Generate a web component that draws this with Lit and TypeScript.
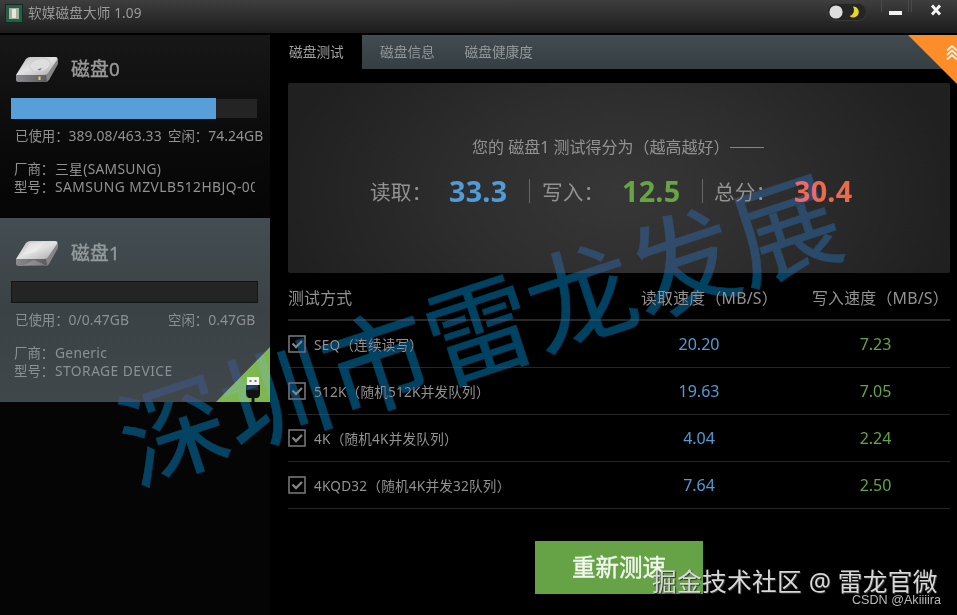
import { LitElement, html, css, svg } from "lit";
import { customElement, property } from "lit/decorators.js";

interface Disk {
  name: string;
  percent: number;
  used: string;
  free: string;
  vendor: string;
  model: string;
  usb: boolean;
}

const disks: Disk[] = [
  { name: "磁盘0", percent: 83.5, used: "389.08/463.33", free: "74.24GB", vendor: "三星(SAMSUNG)", model: "SAMSUNG MZVLB512HBJQ-00", usb: false },
  { name: "磁盘1", percent: 0, used: "0/0.47GB", free: "0.47GB", vendor: "Generic", model: "STORAGE DEVICE", usb: true },
];

const tests = [
  { name: "SEQ（连续读写）", read: "20.20", write: "7.23" },
  { name: "512K（随机512K并发队列）", read: "19.63", write: "7.05" },
  { name: "4K（随机4K并发队列）", read: "4.04", write: "2.24" },
  { name: "4KQD32（随机4K并发32队列）", read: "7.64", write: "2.50" },
];

@customElement("disk-card")
export class DiskCard extends LitElement {
  @property({ attribute: false }) disk!: Disk;

  static styles = css`
    :host { display: block; }
    .card {
      position: relative;
      box-sizing: border-box;
      height: 183px;
      padding: 16px 0 0 11px;
      color: #929292;
      font-size: 13.4px;
      line-height: 18px;
      background: linear-gradient(#171717, #0a0a0a 60%, #050505);
      white-space: nowrap;
      overflow: hidden;
    }
    .active {
      height: 184px;
      padding-top: 17px;
      background: linear-gradient(#434d52, #3b4245 50%, #40474a);
      color: #8b9193;
    }
    .head { display: flex; align-items: center; height: 36px; }
    .drive { width: 50px; height: 32px; margin-right: 10px; }
    .name { font-size: 18.8px; color: #999; letter-spacing: 0.2px; -webkit-text-stroke: 0.4px currentColor; }
    .active .name { color: #939a9c; }
    .bar { display: flex; align-items: center; width: 246px; height: 21px; margin-top: 11px; }
    .fill { height: 21px; background: #569fd8; }
    .rest { flex: 1; height: 19px; background: #242424; }
    .active .bar { box-sizing: border-box; width: 247px; height: 22px; border: 1px solid #111516; background: #242424; margin-top: 10px; }
    .usage { display: grid; grid-template-columns: 153px 1fr; margin: 8px 0 0 4px; }
    .info { margin: 15px 0 0 3px; width: 241px; overflow: hidden; }
    .info div { display: flex; height: 18px; overflow: hidden; }
    .label { width: 41px; flex: none; }
    .num { font-size: 13.9px; letter-spacing: 0.08px; }
    .latin { font-size: 13.8px; letter-spacing: 0.45px; }
    .mixed { font-size: 13.8px; letter-spacing: 0.3px; }
    .usb { position: absolute; right: 0; bottom: 0; width: 54px; height: 55px; }
  `;

  render() {
    const d = this.disk;
    return html`
      <div class="card ${d.usb ? "active" : ""}">
        <div class="head">
          <svg class="drive" viewBox="0 0 50 32">
            <defs>
              <linearGradient id="top" x1="0" y1="0" x2="1" y2="1">
                <stop offset="0" stop-color="#bdbdbd" /><stop offset=".5" stop-color="#e2e2e2" /><stop offset="1" stop-color="#a9a9a9" />
              </linearGradient>
              <linearGradient id="side" x1="0" y1="0" x2="1" y2="0">
                <stop offset="0" stop-color="#8b8a8e" /><stop offset="1" stop-color="#5c5c60" />
              </linearGradient>
            </defs>
            <path d="M5 24 L15 6 Q17 4 20 4 H44 Q47 4 47 7 V11 L38 27 Q37 29 34 29 H8 Q5 29 5 26Z" fill="#858587" />
            <path d="M5 22 L15 6 Q17 4 20 4 H44 Q47 4 46 7 L37 20 Q36 22 33 22 H7 Q5 22 5 22Z" fill="url(#top)" />
            <path d="M5 22 H35 L36 28 Q35 29 33 29 H8 Q5 29 5 26Z" fill="url(#side)" />
            ${d.usb
              ? svg`<path d="M19 6 L35 5 L24 15 L11 18Z" fill="#fff" opacity=".35"/><path d="M13 28 L23 23 L34 28Z" fill="#b5b5b8" opacity=".4"/>`
              : svg`<ellipse cx="29" cy="12" rx="10.500" ry="6.500" fill="#dedede" stroke="#cccccc" transform="rotate(-12 29 12)"/><path d="M26 16.500 L31 15 L29 17.500Z" fill="#777"/><rect x="27.500" y="23.500" width="2" height="3.500" fill="#e0cc7c"/>`}
          </svg>
          <div class="name">${d.name}</div>
        </div>
        <div class="bar">
          <div class="fill" style="width:${d.percent}%"></div>
          <div class="rest"></div>
        </div>
        <div class="usage">
          <div>已使用：<span class="num">${d.used}</span></div>
          <div>空闲：<span class="num">${d.free}</span></div>
        </div>
        <div class="info">
          <div><span class="label">厂商：</span><span class="mixed">${d.vendor}</span></div>
          <div><span class="label">型号：</span><span class="latin">${d.model}</span></div>
        </div>
        ${d.usb
          ? html`<svg class="usb" viewBox="0 0 54 55">
              <path d="M54 0 V55 H0Z" fill="#7eb750" />
              <rect x="31" y="30" width="12" height="9" fill="#f4f4f4" />
              <rect x="33.500" y="33" width="2" height="2" fill="#777" /><rect x="38.500" y="33" width="2" height="2" fill="#777" />
              <path d="M30 38 H44 V47 Q44 50 41 51 H38.500 V55 H35.500 V51 H33 Q30 50 30 47Z" fill="#111" />
              <path d="M31.500 39.500 H42.500 V43 H31.500Z" fill="#2b2b2b" />
            </svg>`
          : ""}
      </div>
    `;
  }
}

@customElement("app-root")
export class AppRoot extends LitElement {
  static styles = css`
    :host {
      display: block;
      position: relative;
      width: 957px;
      height: 615px;
      overflow: hidden;
      background: #000;
      color: #929292;
      font-family: "Noto Sans", "Noto Sans CJK SC", sans-serif;
    }
    .titlebar {
      box-sizing: border-box;
      display: flex;
      align-items: flex-start;
      height: 35px;
      background: linear-gradient(#3e3e3e, #1c1c1c 94%, #000 95%);
      padding-left: 5px;
    }
    .logo { width: 18px; height: 19px; margin-top: 4px; }
    .title { margin-left: 5px; font-size: 13.6px; letter-spacing: 0.15px; line-height: 26px; color: #9a9a9a; flex: 1; }
    .controls { width: 132px; height: 34px; }
    .body { display: flex; height: 580px; }
    .sidebar { width: 270px; background: #050505; }
    .main { flex: 1; display: flex; flex-direction: column; position: relative; }
    .tabs { display: flex; height: 34px; background: linear-gradient(#424c51, #353e41); font-size: 13.7px; line-height: 33px; }
    .tab { width: 92px; box-sizing: border-box; padding-left: 19px; background: #000; color: #a2a2a2; }
    .idle { background: none; color: #92989a; padding-left: 18px; width: 84.5px; }
    .wide { width: 110px; }
    .fold { position: absolute; top: 0; right: 0; width: 49px; height: 49px; }
    .score {
      box-sizing: border-box;
      margin: 14px 7px 0 18px;
      height: 190px;
      padding-top: 51px;
      border-radius: 2px;
      background: radial-gradient(ellipse 340px 210px at 50% 58%, #373737, #2e2e2e 45%, #202020);
    }
    .caption { display: flex; align-items: center; margin-left: 184px; font-size: 16px; line-height: 26px; white-space: pre; }
    .dash { width: 34px; height: 1px; background: #858585; margin-left: 1px; }
    .results { display: grid; grid-template-columns: 79px 80px 13px 80px 80px 12px 80px 1fr; align-items: center; margin: 11px 0 0 82px; height: 40px; font-size: 20.7px; white-space: nowrap; }
    .rule { width: 1px; height: 24px; background: #666; }
    .num { font: 700 28.8px/38px "Noto Sans", sans-serif; letter-spacing: 0.2px; }
    .blue { color: #519bd6; }
    .green { color: #66a446; }
    .red { color: #ea6a4c; }
    .table { margin: 0 7px 0 18px; font-size: 13.6px; letter-spacing: 0.22px; }
    .row { display: grid; grid-template-columns: 26px 313px 144px 1fr; height: 46px; align-items: center; border-bottom: 1px solid #262626; white-space: nowrap; }
    .header { grid-template-columns: 353px 171px 1fr; height: 46px; border-bottom: 2px solid #292929; font-size: 15.9px; }
    .header div { line-height: 40px; margin-bottom: -4px; }
    .value { font-size: 16px; text-align: center; letter-spacing: 0; }
    .value.green { margin-left: 30px; width: 149px; }
    .check { width: 18px; height: 18px; display: block; }
    .button { align-self: flex-start; margin: 32px 0 0 265px; width: 168px; height: 53px; box-sizing: border-box; padding-left: 37px; background: #66a346; color: #f4f8f2; font-size: 23.5px; -webkit-text-stroke: 0.4px currentColor; line-height: 52px; }
    .watermark {
      position: absolute;
      left: 479px;
      top: 328.5px;
      transform: translate(-50%, -50%) rotate(-18.2deg);
      font-size: 107.3px;
      line-height: 1;
      color: #005279;
      -webkit-text-stroke: 0.6px #005279;
      opacity: 0.8;
      mix-blend-mode: lighten;
      white-space: nowrap;
    }
    .community { position: absolute; left: 652px; top: 564px; font-size: 24.7px; letter-spacing: 0.3px; line-height: 36px; color: #d8d8d8; text-shadow: 1px 1px 1px #333; white-space: nowrap; }
    .credit { position: absolute; left: 852px; top: 591px; font: 12.6px/18px "Liberation Sans", sans-serif; color: #b9b9b9; white-space: nowrap; }
  `;

  render() {
    return html`
      <div class="titlebar">
        <svg class="logo" viewBox="0 0 18 19">
          <rect x=".5" y=".5" width="17" height="18" fill="#2c5a49" stroke="#122a21" />
          <path d="M4 4 H14 V15 H4Z" fill="#9fb3a4" /><path d="M7 5 H11 V14 H7Z" fill="#e6e6da" />
        </svg>
        <div class="title">软媒磁盘大师 1.09</div>
        <svg class="controls" viewBox="825 0 132 34">
          <rect x="827.500" y="3.500" width="39" height="17" rx="8.500" fill="#252525" stroke="#383838" />
          <circle cx="836" cy="12" r="6.600" fill="#dedede" />
          <path d="M853 6.500 A5.500 5.500 0 1 1 849.500 16 A6.200 6.200 0 0 0 853 6.500Z" fill="#e8d824" />
          <path d="M881.500 0 V12 M908.500 0 V12 M911.500 0 V12" stroke="#494949" />
          <rect x="889" y="11" width="13" height="4" fill="#f2f2f2" />
          <path d="M932 5.500 L940 14.500 M940 5.500 L932 14.500" stroke="#f5f5f5" stroke-width="2.800" />
        </svg>
      </div>
      <div class="body">
        <div class="sidebar">${disks.map((d) => html`<disk-card .disk=${d}></disk-card>`)}</div>
        <div class="main">
          <div class="tabs">
            <div class="tab">磁盘测试</div>
            <div class="tab idle">磁盘信息</div>
            <div class="tab idle wide">磁盘健康度</div>
          </div>
          <svg class="fold" viewBox="0 0 49 49">
            <path d="M0 0 H49 V49Z" fill="#fc8d29" />
            <path d="M39 15.500 L44 11 L49 15.500 M39 20 L44 15.500 L49 20 M39 24.500 L44 20 L49 24.500" fill="none" stroke="#fff1df" stroke-width="1.700" />
          </svg>
          <div class="score">
            <div class="caption"><span>您的 磁盘1 测试得分为（越高越好）</span><i class="dash"></i></div>
            <div class="results">
              <span>读取：</span><span class="num blue">33.3</span><i class="rule"></i>
              <span>写入：</span><span class="num green">12.5</span><i class="rule"></i>
              <span>总分：</span><span class="num red">30.4</span>
            </div>
          </div>
          <div class="table">
            <div class="row header"><div>测试方式</div><div>读取速度（MB/S）</div><div>写入速度（MB/S）</div></div>
            ${tests.map(
              (t) => html`<div class="row">
                <svg class="check" viewBox="0 0 18 18">
                  <rect x="1" y="1" width="16" height="16" fill="none" stroke="#757575" stroke-width="1.600" />
                  <path d="M4.500 8.500 L8 12 L14 6" fill="none" stroke="#858585" stroke-width="2.300" />
                </svg>
                <div>${t.name}</div>
                <div class="value blue">${t.read}</div>
                <div class="value green">${t.write}</div>
              </div>`
            )}
          </div>
          <div class="button">重新测速</div>
        </div>
      </div>
      <div class="watermark">深圳市雷龙发展</div>
      <div class="community">掘金技术社区 @ 雷龙官微</div>
      <div class="credit">CSDN @Akiiiira</div>
    `;
  }
}
